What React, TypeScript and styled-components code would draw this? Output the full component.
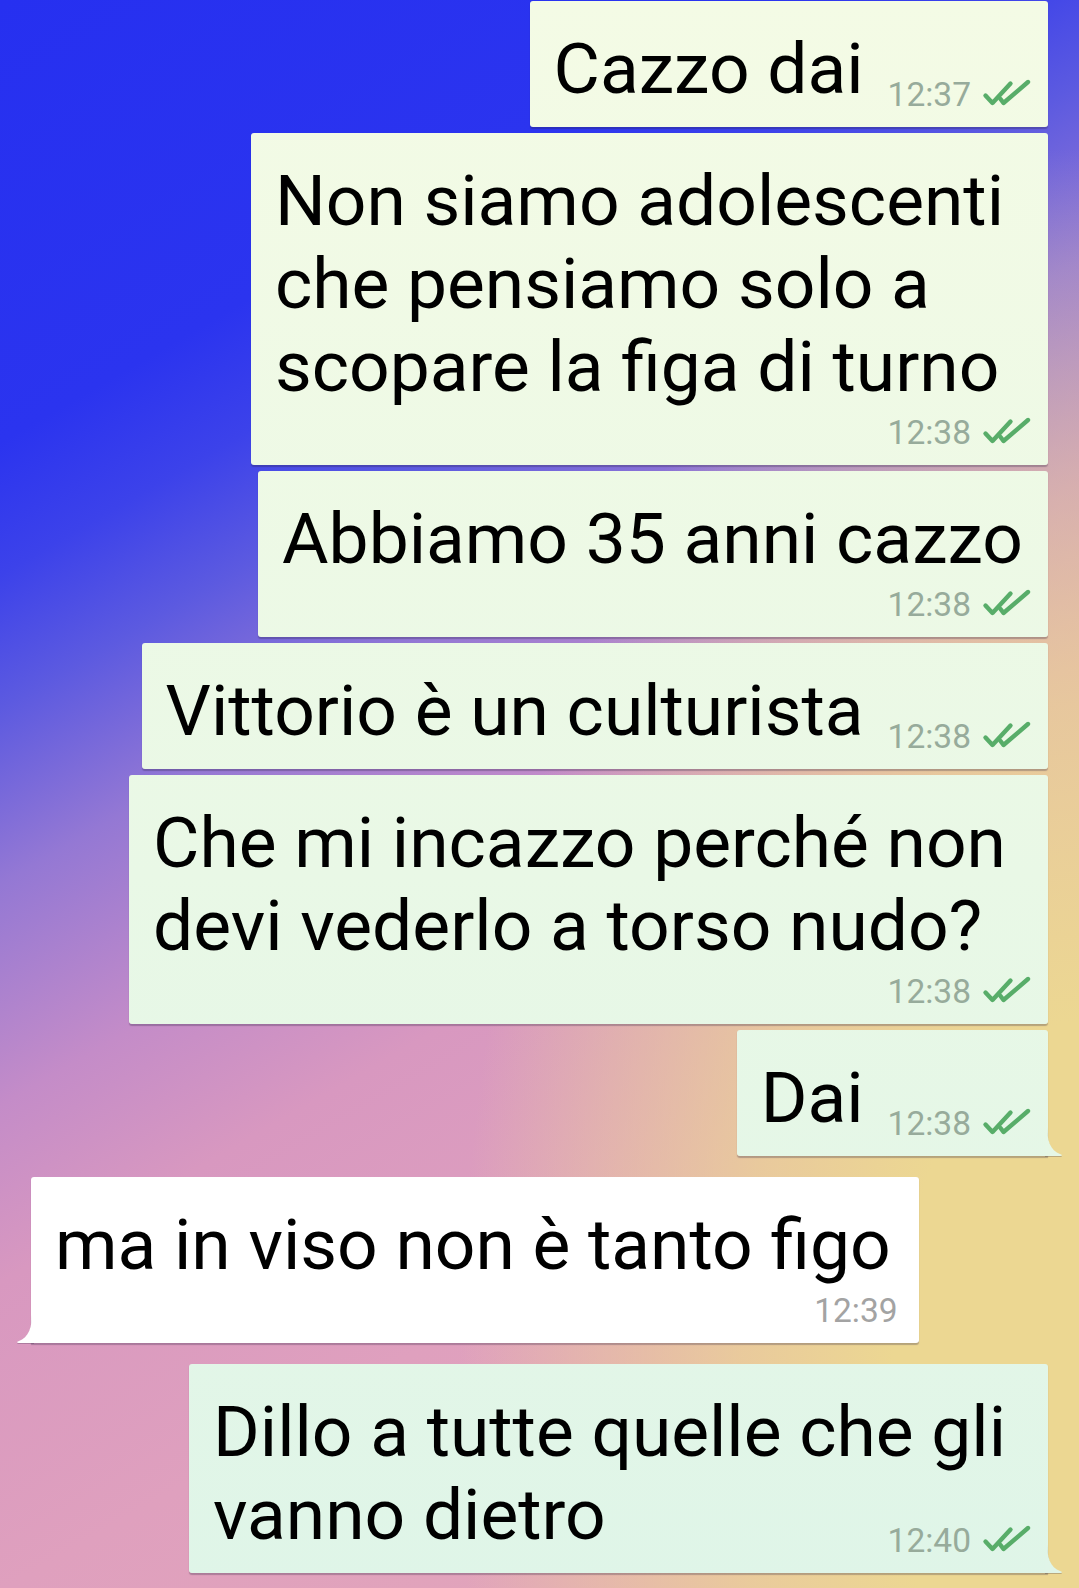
import React from 'react';
import styled, { createGlobalStyle } from 'styled-components';

type Side = 'in' | 'out';

interface Message {
  side: Side;
  lines: string[];
  time: string;
  stacked: boolean;
  trail?: number;
  tail?: boolean;
}

const messages: Message[] = [
  { side: 'out', lines: ['Cazzo dai'], time: '12:37', stacked: false },
  {
    side: 'out',
    lines: ['Non siamo adolescenti', 'che pensiamo solo a', 'scopare la figa di turno'],
    time: '12:38',
    stacked: true,
    trail: 25,
  },
  { side: 'out', lines: ['Abbiamo 35 anni cazzo'], time: '12:38', stacked: true, trail: 6 },
  { side: 'out', lines: ['Vittorio è un culturista'], time: '12:38', stacked: false },
  {
    side: 'out',
    lines: ['Che mi incazzo perché non', 'devi vederlo a torso nudo?'],
    time: '12:38',
    stacked: true,
    trail: 23,
  },
  { side: 'out', lines: ['Dai'], time: '12:38', stacked: false, tail: true },
  { side: 'in', lines: ['ma in viso non è tanto figo'], time: '12:39', stacked: true, trail: 7, tail: true },
  {
    side: 'out',
    lines: ['Dillo a tutte quelle che gli', 'vanno dietro'],
    time: '12:40',
    stacked: false,
    trail: 23,
    tail: true,
  },
];

const GlobalStyle = createGlobalStyle`
  html, body {
    margin: 0;
    padding: 0;
    background: #2630f0;
  }
  body {
    font-family: Roboto, "Noto Sans", "Liberation Sans", sans-serif;
    -webkit-font-smoothing: antialiased;
  }
`;

const Screen = styled.main`
  width: 1079px;
  height: 1588px;
  box-sizing: border-box;
  overflow: hidden;
  padding: 1px 31px 0 31px;
  display: flex;
  flex-direction: column;
  background:
    radial-gradient(
      ellipse 620px 1250px at 100% 88%,
      rgba(236, 215, 146, 1) 0%,
      rgba(236, 215, 146, 1) 30%,
      rgba(236, 215, 146, 0.75) 55%,
      rgba(236, 215, 146, 0.35) 80%,
      rgba(236, 215, 146, 0) 100%
    ),
    linear-gradient(
      150deg,
      #2630f0 0%,
      #2b34ef 20%,
      #3c42ea 26%,
      #5c5ae0 32%,
      #9478d4 40%,
      #c48cc8 50%,
      #d898c0 58%,
      #dfa0be 72%,
      #e4a8b8 100%
    );
`;

const Row = styled.div<{ $gap: number }>`
  display: flex;
  flex-direction: column;
  margin-top: ${(p) => p.$gap}px;
`;

const Bubble = styled.div<{ $side: Side; $tail: boolean }>`
  position: relative;
  align-self: ${(p) => (p.$side === 'out' ? 'flex-end' : 'flex-start')};
  display: flex;
  flex-direction: column;
  box-sizing: border-box;
  padding: 26px ${(p) => (p.$side === 'out' ? 19 : 21)}px 17px 24px;
  border-radius: 3px;
  ${(p) =>
    p.$tail && p.$side === 'out' ? 'border-bottom-right-radius: 0;' : ''}
  ${(p) =>
    p.$tail && p.$side === 'in' ? 'border-bottom-left-radius: 0;' : ''}
  background: ${(p) =>
    p.$side === 'out'
      ? 'linear-gradient(180deg, #f4fbe5 0%, #e9f8e6 55%, #dff5e8 100%) fixed'
      : '#ffffff'};
  box-shadow: 0 1.5px 1px rgba(40, 30, 60, 0.28);
  color: #000000;
`;

const Line = styled.div<{ $trail: number }>`
  font-size: 71.3px;
  line-height: 83px;
  white-space: nowrap;
  padding-right: ${(p) => p.$trail}px;
`;

const LastRow = styled.div<{ $stacked: boolean }>`
  display: flex;
  flex-direction: ${(p) => (p.$stacked ? 'column' : 'row')};
  align-items: ${(p) => (p.$stacked ? 'stretch' : 'flex-end')};
  justify-content: space-between;
  gap: ${(p) => (p.$stacked ? 7 : 24)}px;
`;

const Meta = styled.div<{ $side: Side }>`
  align-self: flex-end;
  display: flex;
  align-items: center;
  gap: 13px;
  height: 36px;
  margin-bottom: -3px;
  font-size: 33.5px;
  line-height: 36px;
  white-space: nowrap;
  color: ${(p) => (p.$side === 'out' ? '#97ab9b' : '#a3a3a3')};
`;

const Ticks = styled.svg`
  display: block;
  width: 45px;
  height: 25px;
  overflow: visible;
  margin-top: -3px;
`;

const TailShape = styled.svg<{ $side: Side }>`
  position: absolute;
  bottom: 0;
  width: 16px;
  height: 30px;
  overflow: visible;
  ${(p) => (p.$side === 'out' ? 'right: -15px;' : 'left: -15px; transform: scaleX(-1);')}
  filter: drop-shadow(0 1.5px 0.6px rgba(40, 30, 60, 0.25));
`;

const DoubleTick: React.FC = () => (
  <Ticks viewBox="0 0 45 25" aria-hidden="true">
    <g fill="none" stroke="#58ad69" strokeWidth="4.4" strokeLinecap="round" strokeLinejoin="round">
      <polyline points="1.5,14.5 8.5,22 26.5,2.5" />
      <polyline points="16.5,18 19.5,22 44,1" />
    </g>
  </Ticks>
);

const Tail: React.FC<{ side: Side; color: string }> = ({ side, color }) => (
  <TailShape $side={side} viewBox="0 0 16 30" aria-hidden="true">
    <path d="M-2 0 L0 0 C0 14 3 24.5 13.5 28.3 C15.6 29 15.2 30 13.5 30 L-2 30 Z" fill={color} />
  </TailShape>
);

const ChatBubble: React.FC<{ m: Message }> = ({ m }) => {
  const trail = m.trail ?? 0;
  const head = m.lines.slice(0, -1);
  const last = m.lines[m.lines.length - 1];
  const tailColor = m.side === 'out' ? (m.time === '12:40' ? '#e0f5e8' : '#e6f7e6') : '#ffffff';
  return (
    <Bubble $side={m.side} $tail={!!m.tail}>
      {head.map((l, i) => (
        <Line key={i} $trail={trail}>
          {l}
        </Line>
      ))}
      <LastRow $stacked={m.stacked}>
        <Line $trail={m.stacked ? trail : 0}>{last}</Line>
        <Meta $side={m.side}>
          <span>{m.time}</span>
          {m.side === 'out' && <DoubleTick />}
        </Meta>
      </LastRow>
      {m.tail && <Tail side={m.side} color={tailColor} />}
    </Bubble>
  );
};

export default function App() {
  return (
    <>
      <GlobalStyle />
      <Screen>
        {messages.map((m, i) => {
          const gap = i === 0 ? 0 : messages[i - 1].side === m.side ? 6 : 21;
          return (
            <Row key={i} $gap={gap}>
              <ChatBubble m={m} />
            </Row>
          );
        })}
      </Screen>
    </>
  );
}
